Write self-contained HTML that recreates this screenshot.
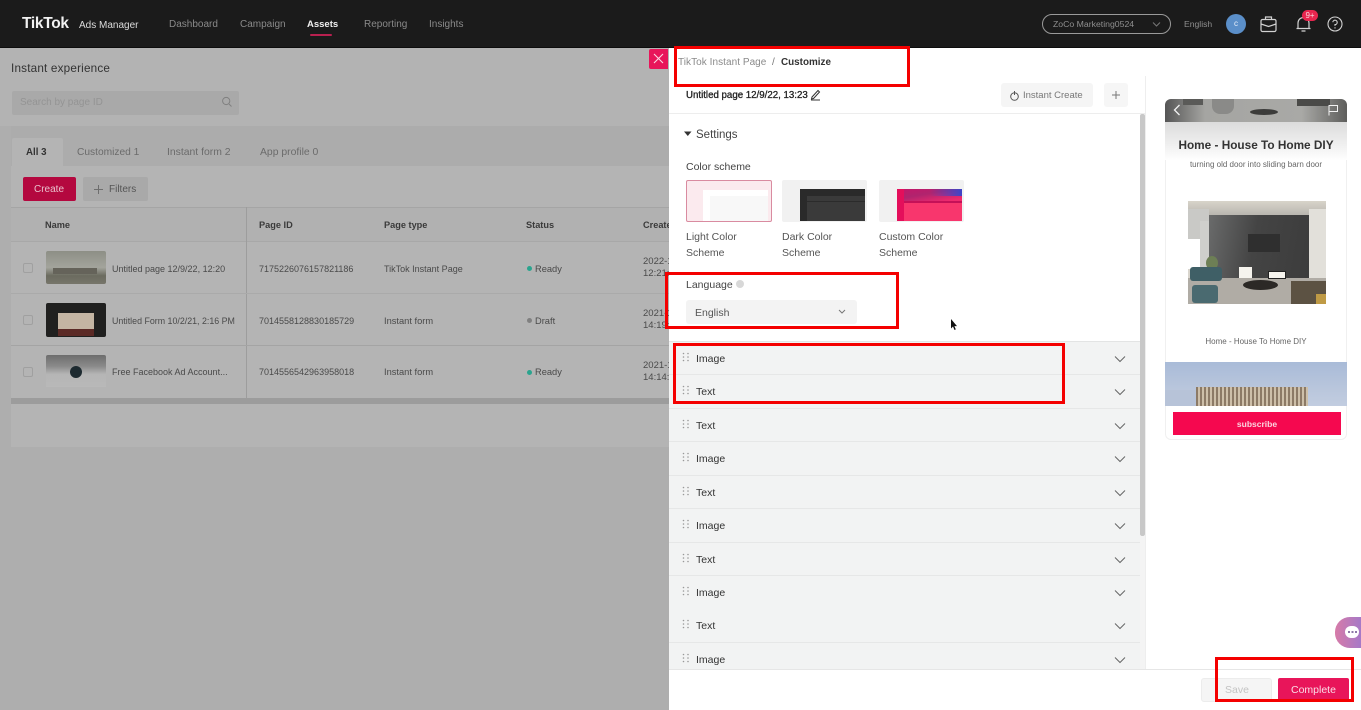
<!DOCTYPE html>
<html><head><meta charset="utf-8">
<style>
*{box-sizing:border-box}
html,body{margin:0;padding:0;width:1361px;height:710px;overflow:hidden;background:#fff;font-family:"Liberation Sans",sans-serif}
.a{position:absolute}
#c{position:absolute;left:0;top:0;width:1361px;height:710px;filter:blur(.3px);overflow:hidden}
.t{position:absolute;white-space:nowrap;line-height:14px;font-size:10px;color:#4a4a4a}
.h{font-weight:bold;color:#3a3a3a;font-size:9.2px}
.c{font-size:9px;color:#4a4a4a}
.row{position:absolute;left:669px;width:471px;height:33.5px;background:#f2f3f3;border-bottom:1px solid #e6e7e7}
.row span{position:absolute;left:27px;top:10px;font-size:10.5px;line-height:14px;color:#333}
.row svg{position:absolute}
</style></head><body>
<div id="c">

<!-- Left dimmed page -->
<div class="a" style="left:0;top:48px;width:669px;height:662px;background:#aeaeae"></div>
<div class="a" style="left:0;top:48px;width:669px;height:78px;background:#b3b3b3"></div>
<div class="t" style="left:11px;top:62px;font-size:11.7px;color:#333;letter-spacing:.2px">Instant experience</div>
<div class="a" style="left:12px;top:91px;width:227px;height:24px;background:#a9a9a9;border-radius:2px"></div>
<div class="t" style="left:20px;top:96px;color:#949494">Search by page ID</div>
<svg class="a" style="left:221px;top:96px" width="12" height="12" viewBox="0 0 12 12" fill="none" stroke="#808080"><circle cx="5.2" cy="5" r="3.6"/><path d="M8 8l2.5 2.5"/></svg>

<div class="a" style="left:11px;top:126px;width:658px;height:321px;background:#b4b4b4"></div>
<div class="a" style="left:11px;top:126px;width:658px;height:40px;background:#acacac"></div>
<div class="a" style="left:12px;top:138px;width:51px;height:28px;background:#b4b4b4;border-radius:2px 2px 0 0"></div>
<div class="t" style="left:26px;top:146px;font-weight:bold;color:#333;font-size:9.7px">All 3</div>
<div class="t" style="left:77px;top:146px;color:#6b6b6b;font-size:10.2px">Customized 1</div>
<div class="t" style="left:167px;top:146px;color:#6b6b6b;font-size:10.4px">Instant form 2</div>
<div class="t" style="left:260px;top:146px;color:#6b6b6b;font-size:10.4px">App profile 0</div>

<div class="a" style="left:23px;top:177px;width:53px;height:24px;background:#b4083f;border-radius:2px"></div>
<div class="t" style="left:34px;top:183px;color:#e9c0cc">Create</div>
<div class="a" style="left:83px;top:177px;width:65px;height:24px;background:#a9a9a9;border-radius:2px"></div>
<svg class="a" style="left:93px;top:184px" width="11" height="11" viewBox="0 0 11 11" stroke="#6e6e6e"><path d="M5.5 1v9M1 5.500h9"/></svg>
<div class="t" style="left:109px;top:183px;color:#555">Filters</div>

<div class="a" style="left:11px;top:207px;width:658px;height:35px;background:#b1b1b1;border-top:1.500px solid #a5a5a5;border-bottom:1.500px solid #a8a8a8"></div>
<div class="a" style="left:246px;top:207px;width:1px;height:191px;background:#9d9d9d"></div>
<div class="t h" style="left:45px;top:218px">Name</div>
<div class="t h" style="left:259px;top:218px">Page ID</div>
<div class="t h" style="left:384px;top:218px">Page type</div>
<div class="t h" style="left:526px;top:218px">Status</div>
<div class="t h" style="left:643px;top:218px;width:26px;overflow:hidden">Create</div>

<div class="a" style="left:11px;top:293px;width:658px;height:1px;background:#aaa"></div>
<div class="a" style="left:11px;top:345px;width:658px;height:1px;background:#a4a4a4"></div>
<div class="a" style="left:11px;top:398px;width:658px;height:6px;background:#9c9c9c"></div>

<!-- Row 1 -->
<div class="a" style="left:23px;top:263px;width:10px;height:10px;border:1px solid #a0a0a0;border-radius:2px"></div>
<div class="a" style="left:46px;top:251px;width:60px;height:33px;border-radius:2px;background:linear-gradient(180deg,#8d8f86 0%,#a3a49c 50%,#6b6b5f 75%,#77766b 100%)"></div>
<div class="a" style="left:53px;top:268px;width:44px;height:6px;background:#65635a"></div>
<div class="t c" style="left:112px;top:262px">Untitled page 12/9/22, 12:20</div>
<div class="t c" style="left:259px;top:262px">7175226076157821186</div>
<div class="t c" style="left:384px;top:262px">TikTok Instant Page</div>
<div class="a" style="left:527px;top:266px;width:5px;height:5px;border-radius:50%;background:#2aa48e"></div>
<div class="t c" style="left:535px;top:262px;font-size:9.300px">Ready</div>
<div class="t c" style="left:643px;top:255px;width:26px;overflow:hidden;font-size:9.500px">2022-12-09</div>
<div class="t c" style="left:643px;top:267px;width:26px;overflow:hidden;font-size:9.500px">12:21:00</div>

<!-- Row 2 -->
<div class="a" style="left:23px;top:315px;width:10px;height:10px;border:1px solid #a0a0a0;border-radius:2px"></div>
<div class="a" style="left:46px;top:303px;width:60px;height:34px;border-radius:2px;background:#20201f"></div>
<div class="a" style="left:58px;top:313px;width:36px;height:16px;background:#c4b5a3"></div>
<div class="a" style="left:58px;top:329px;width:36px;height:7px;background:#5b2a26"></div>
<div class="t c" style="left:112px;top:314px;font-size:8.850px">Untitled Form 10/2/21, 2:16 PM</div>
<div class="t c" style="left:259px;top:314px">7014558128830185729</div>
<div class="t c" style="left:384px;top:314px;font-size:9.300px">Instant form</div>
<div class="a" style="left:527px;top:318px;width:5px;height:5px;border-radius:50%;background:#808080"></div>
<div class="t c" style="left:535px;top:314px;font-size:9.300px">Draft</div>
<div class="t c" style="left:643px;top:307px;width:26px;overflow:hidden;font-size:9.500px">2021-10-02</div>
<div class="t c" style="left:643px;top:319px;width:26px;overflow:hidden;font-size:9.500px">14:19:00</div>

<!-- Row 3 -->
<div class="a" style="left:23px;top:367px;width:10px;height:10px;border:1px solid #a0a0a0;border-radius:2px"></div>
<div class="a" style="left:46px;top:355px;width:60px;height:32px;border-radius:2px 2px 0 0;background:linear-gradient(180deg,#6d6d6d 0%,#8a8a8a 35%,#b5b5b5 60%,#b9b9b9 100%)"></div>
<div class="a" style="left:70px;top:366px;width:12px;height:12px;border-radius:50%;background:#1d2a30"></div>
<div class="t c" style="left:112px;top:365px">Free Facebook Ad Account...</div>
<div class="t c" style="left:259px;top:365px">7014556542963958018</div>
<div class="t c" style="left:384px;top:365px;font-size:9.300px">Instant form</div>
<div class="a" style="left:527px;top:370px;width:5px;height:5px;border-radius:50%;background:#2aa48e"></div>
<div class="t c" style="left:535px;top:365px;font-size:9.300px">Ready</div>
<div class="t c" style="left:643px;top:359px;width:26px;overflow:hidden;font-size:9.500px">2021-10-02</div>
<div class="t c" style="left:643px;top:371px;width:26px;overflow:hidden;font-size:9.500px">14:14:00</div>

<!-- Header -->
<div class="a" style="left:0;top:0;width:1361px;height:48px;background:#1b1b1b;border-bottom:1.500px solid #0d0d0d"></div>
<div class="t" style="left:22px;top:15px;font-size:15.500px;line-height:18px;font-weight:bold;color:#f2f2f2;letter-spacing:-.3px">TikTok</div>
<div class="t" style="left:79px;top:19px;font-size:10px;color:#dcdcdc">Ads Manager</div>
<div class="t" style="left:169px;top:18px;color:#8a8a8a">Dashboard</div>
<div class="t" style="left:240px;top:18px;color:#8a8a8a">Campaign</div>
<div class="t" style="left:307px;top:18px;color:#f0f0f0;font-weight:bold;font-size:9.500px">Assets</div>
<div class="a" style="left:310px;top:34px;width:22px;height:2px;background:#b8204f;border-radius:1px"></div>
<div class="t" style="left:364px;top:18px;color:#8a8a8a">Reporting</div>
<div class="t" style="left:429px;top:18px;color:#8a8a8a">Insights</div>

<div class="a" style="left:1042px;top:14px;width:129px;height:20px;border:1px solid #9a9a9a;border-radius:10px"></div>
<div class="t" style="left:1053px;top:17px;font-size:8.700px;color:#8f8f8f">ZoCo Marketing0524</div>
<svg class="a" style="left:1152px;top:21px" width="9" height="7" viewBox="0 0 9 7" fill="none" stroke="#777"><path d="M1 1.500l3.500 3.500 3.500-3.500"/></svg>
<div class="t" style="left:1184px;top:17px;font-size:8.600px;color:#8f8f8f">English</div>
<div class="a" style="left:1226px;top:14px;width:20px;height:20px;border-radius:50%;background:#5b8fc9;color:#e6eefa;font-size:8px;line-height:20px;text-align:center">c</div>
<svg class="a" style="left:1260px;top:15px" width="17" height="18" viewBox="0 0 17 18" fill="none" stroke="#d2d2d2" stroke-width="1.200"><rect x="1" y="4.500" width="15" height="12" rx="1.500"/><path d="M5.500 4.500V2h6v2.500M1 9l7.500 2.500L16 9"/></svg>
<svg class="a" style="left:1295px;top:15px" width="17" height="18" viewBox="0 0 17 18" fill="none" stroke="#d2d2d2" stroke-width="1.200"><path d="M3 13.500V8a5.500 5.500 0 0111 0v5.500M1.500 13.500h14M6.500 16h4"/></svg>
<div class="a" style="left:1302px;top:10px;width:16px;height:11px;border-radius:6px;background:#e8264f;color:#f8d5dc;font-size:8px;line-height:11px;text-align:center">9+</div>
<svg class="a" style="left:1327px;top:16px" width="16" height="16" viewBox="0 0 16 16" fill="none" stroke="#d2d2d2" stroke-width="1.100"><circle cx="8" cy="8" r="7"/><path d="M5.800 6.200A2.200 2.200 0 118 8.600v1.300M8 11.300v1.200"/></svg>

<!-- Close button -->
<div class="a" style="left:649px;top:49px;width:19px;height:20px;background:#e8155a;border-radius:2px 0 0 2px"></div>
<svg class="a" style="left:653px;top:53px" width="11" height="11" viewBox="0 0 11 11" stroke="#fbd8e4" stroke-width="1.100"><path d="M1 1l9 9M10 1l-9 9"/></svg>

<!-- Right panel -->
<div class="a" style="left:669px;top:48px;width:692px;height:662px;background:#fff"></div>
<div class="t" style="left:678px;top:56px;font-size:10px;color:#8a8a8a;letter-spacing:.05px">TikTok Instant Page</div>
<div class="t" style="left:772px;top:56px;font-size:10px;color:#777">/</div>
<div class="t" style="left:781px;top:56px;font-size:9.900px;font-weight:bold;color:#333">Customize</div>
<div class="t" style="left:686px;top:89px;font-size:9.700px;color:#222;-webkit-text-stroke:.3px #222">Untitled page 12/9/22, 13:23</div>
<svg class="a" style="left:810px;top:89px" width="11" height="12" viewBox="0 0 11 12" fill="none" stroke="#333" stroke-width="1"><path d="M2 8l6-6.500 1.500 1.500-6 6.500-2 .5zM1 11h9"/></svg>
<div class="a" style="left:1001px;top:83px;width:92px;height:24px;background:#f5f5f5;border-radius:3px"></div>
<svg class="a" style="left:1009px;top:90px" width="11" height="11" viewBox="0 0 11 11" fill="none" stroke="#555"><circle cx="5.500" cy="6.500" r="3.800"/><path d="M5.500 1v4"/></svg>
<div class="t" style="left:1023px;top:89px;font-size:9.500px;color:#777">Instant Create</div>
<div class="a" style="left:1104px;top:83px;width:24px;height:24px;background:#f6f6f6;border-radius:3px"></div>
<svg class="a" style="left:1111px;top:90px" width="10" height="10" viewBox="0 0 10 10" stroke="#777"><path d="M5 1v8M1 5h8"/></svg>
<div class="a" style="left:669px;top:113px;width:477px;height:1px;background:#ededed"></div>
<div class="a" style="left:1145px;top:76px;width:1px;height:593px;background:#eeeeee"></div>
<div class="a" style="left:1140px;top:114px;width:5px;height:422px;background:#c8c8c8;border-radius:2px"></div>

<svg class="a" style="left:684px;top:131px" width="8" height="6" viewBox="0 0 8 6" fill="#333"><path d="M0 .5h7.500L3.800 5z"/></svg>
<div class="t" style="left:696px;top:128px;font-size:11.500px;color:#444">Settings</div>
<div class="t" style="left:686px;top:160px;font-size:10.500px;color:#444">Color scheme</div>

<div class="a" style="left:686px;top:180px;width:86px;height:42px;background:#fbeaee;border:1px solid #d98ba0;border-radius:2px"></div>
<div class="a" style="left:703px;top:190px;width:65px;height:31px;background:#f8f8f8"></div>
<div class="a" style="left:703px;top:190px;width:65px;height:6px;background:#fff"></div>
<div class="a" style="left:703px;top:196px;width:7px;height:25px;background:#fff"></div>
<div class="a" style="left:782px;top:180px;width:85px;height:42px;background:#f1f1f1;border-radius:2px"></div>
<div class="a" style="left:800px;top:189px;width:65px;height:32px;background:#3a3a3a"></div>
<div class="a" style="left:800px;top:189px;width:7px;height:32px;background:#2a2a2a"></div>
<div class="a" style="left:800px;top:189px;width:65px;height:7px;background:#2a2a2a"></div>
<div class="a" style="left:807px;top:201px;width:58px;height:1px;background:#2b2b2b"></div>
<div class="a" style="left:879px;top:180px;width:85px;height:42px;background:#f1f1f1;border-radius:2px"></div>
<div class="a" style="left:897px;top:189px;width:65px;height:32px;background:#f8366d"></div>
<div class="a" style="left:897px;top:189px;width:7px;height:32px;background:#e40f5b"></div>
<div class="a" style="left:904px;top:189px;width:58px;height:12px;background:linear-gradient(170deg,#c2186a 0%,#b0246e 40%,#f02a6e 90%)"></div>
<div class="a" style="left:930px;top:189px;width:32px;height:7px;background:linear-gradient(90deg,rgba(60,69,200,0),#3c45c8)"></div>
<div class="a" style="left:904px;top:201px;width:58px;height:1.500px;background:#c51158"></div>

<div class="t" style="left:686px;top:230px;font-size:10.500px;color:#555">Light Color</div>
<div class="t" style="left:686px;top:246px;font-size:10.500px;color:#555">Scheme</div>
<div class="t" style="left:782px;top:230px;font-size:10.500px;color:#555">Dark Color</div>
<div class="t" style="left:782px;top:246px;font-size:10.500px;color:#555">Scheme</div>
<div class="t" style="left:879px;top:230px;font-size:10.500px;color:#555">Custom Color</div>
<div class="t" style="left:879px;top:246px;font-size:10.500px;color:#555">Scheme</div>

<div class="t" style="left:686px;top:278px;font-size:10.500px;color:#444">Language</div>
<div class="a" style="left:736px;top:280px;width:8px;height:8px;border-radius:50%;background:#d8d8d8"></div>
<div class="a" style="left:686px;top:300px;width:171px;height:24px;background:#f3f3f3;border-radius:3px"></div>
<div class="t" style="left:695px;top:306px;font-size:10.500px;color:#555">English</div>
<svg class="a" style="left:838px;top:309px" width="8" height="6" viewBox="0 0 8 6" fill="none" stroke="#777"><path d="M1 1l3 3 3-3"/></svg>

<svg class="a" style="left:950px;top:318px" width="8" height="13" viewBox="0 0 8 13"><path d="M1 1v9.500l2-2 1.500 3.500 1.300-.6-1.400-3.300H7z" fill="#111"/></svg>

<!-- Accordion rows -->
<div class="row" style="top:341px;border-top:1px solid #e3e4e4"><span>Image</span><svg style="left:13px;top:10px" width="8" height="11" fill="#999"><circle cx="1.500" cy="1.500" r=".8"/><circle cx="6" cy="1.500" r=".8"/><circle cx="1.500" cy="5" r=".8"/><circle cx="6" cy="5" r=".8"/><circle cx="1.500" cy="8.500" r=".8"/><circle cx="6" cy="8.500" r=".8"/></svg><svg style="left:445px;top:13px" width="12" height="8" fill="none" stroke="#666"><path d="M1 1.500l5 5 5-5"/></svg></div>
<div class="row" style="top:375px"><span>Text</span><svg style="left:13px;top:10px" width="8" height="11" fill="#999"><circle cx="1.500" cy="1.500" r=".8"/><circle cx="6" cy="1.500" r=".8"/><circle cx="1.500" cy="5" r=".8"/><circle cx="6" cy="5" r=".8"/><circle cx="1.500" cy="8.500" r=".8"/><circle cx="6" cy="8.500" r=".8"/></svg><svg style="left:445px;top:13px" width="12" height="8" fill="none" stroke="#666"><path d="M1 1.500l5 5 5-5"/></svg></div>
<div class="row" style="top:408.500px"><span>Text</span><svg style="left:13px;top:10px" width="8" height="11" fill="#999"><circle cx="1.500" cy="1.500" r=".8"/><circle cx="6" cy="1.500" r=".8"/><circle cx="1.500" cy="5" r=".8"/><circle cx="6" cy="5" r=".8"/><circle cx="1.500" cy="8.500" r=".8"/><circle cx="6" cy="8.500" r=".8"/></svg><svg style="left:445px;top:13px" width="12" height="8" fill="none" stroke="#666"><path d="M1 1.500l5 5 5-5"/></svg></div>
<div class="row" style="top:442px"><span>Image</span><svg style="left:13px;top:10px" width="8" height="11" fill="#999"><circle cx="1.500" cy="1.500" r=".8"/><circle cx="6" cy="1.500" r=".8"/><circle cx="1.500" cy="5" r=".8"/><circle cx="6" cy="5" r=".8"/><circle cx="1.500" cy="8.500" r=".8"/><circle cx="6" cy="8.500" r=".8"/></svg><svg style="left:445px;top:13px" width="12" height="8" fill="none" stroke="#666"><path d="M1 1.500l5 5 5-5"/></svg></div>
<div class="row" style="top:475.500px"><span>Text</span><svg style="left:13px;top:10px" width="8" height="11" fill="#999"><circle cx="1.500" cy="1.500" r=".8"/><circle cx="6" cy="1.500" r=".8"/><circle cx="1.500" cy="5" r=".8"/><circle cx="6" cy="5" r=".8"/><circle cx="1.500" cy="8.500" r=".8"/><circle cx="6" cy="8.500" r=".8"/></svg><svg style="left:445px;top:13px" width="12" height="8" fill="none" stroke="#666"><path d="M1 1.500l5 5 5-5"/></svg></div>
<div class="row" style="top:509px"><span>Image</span><svg style="left:13px;top:10px" width="8" height="11" fill="#999"><circle cx="1.500" cy="1.500" r=".8"/><circle cx="6" cy="1.500" r=".8"/><circle cx="1.500" cy="5" r=".8"/><circle cx="6" cy="5" r=".8"/><circle cx="1.500" cy="8.500" r=".8"/><circle cx="6" cy="8.500" r=".8"/></svg><svg style="left:445px;top:13px" width="12" height="8" fill="none" stroke="#666"><path d="M1 1.500l5 5 5-5"/></svg></div>
<div class="row" style="top:542.500px"><span>Text</span><svg style="left:13px;top:10px" width="8" height="11" fill="#999"><circle cx="1.500" cy="1.500" r=".8"/><circle cx="6" cy="1.500" r=".8"/><circle cx="1.500" cy="5" r=".8"/><circle cx="6" cy="5" r=".8"/><circle cx="1.500" cy="8.500" r=".8"/><circle cx="6" cy="8.500" r=".8"/></svg><svg style="left:445px;top:13px" width="12" height="8" fill="none" stroke="#666"><path d="M1 1.500l5 5 5-5"/></svg></div>
<div class="row" style="top:576px"><span>Image</span><svg style="left:13px;top:10px" width="8" height="11" fill="#999"><circle cx="1.500" cy="1.500" r=".8"/><circle cx="6" cy="1.500" r=".8"/><circle cx="1.500" cy="5" r=".8"/><circle cx="6" cy="5" r=".8"/><circle cx="1.500" cy="8.500" r=".8"/><circle cx="6" cy="8.500" r=".8"/></svg><svg style="left:445px;top:13px" width="12" height="8" fill="none" stroke="#666"><path d="M1 1.500l5 5 5-5"/></svg></div>
<div class="row" style="top:609px;height:34px"><span>Text</span><svg style="left:13px;top:10px" width="8" height="11" fill="#999"><circle cx="1.500" cy="1.500" r=".8"/><circle cx="6" cy="1.500" r=".8"/><circle cx="1.500" cy="5" r=".8"/><circle cx="6" cy="5" r=".8"/><circle cx="1.500" cy="8.500" r=".8"/><circle cx="6" cy="8.500" r=".8"/></svg><svg style="left:445px;top:13px" width="12" height="8" fill="none" stroke="#666"><path d="M1 1.500l5 5 5-5"/></svg></div>
<div class="row" style="top:643px;height:26px;border-bottom:0"><span>Image</span><svg style="left:13px;top:10px" width="8" height="11" fill="#999"><circle cx="1.500" cy="1.500" r=".8"/><circle cx="6" cy="1.500" r=".8"/><circle cx="1.500" cy="5" r=".8"/><circle cx="6" cy="5" r=".8"/><circle cx="1.500" cy="8.500" r=".8"/><circle cx="6" cy="8.500" r=".8"/></svg><svg style="left:445px;top:13px" width="12" height="8" fill="none" stroke="#666"><path d="M1 1.500l5 5 5-5"/></svg></div>
<div class="a" style="left:1140px;top:536px;width:5px;height:133px;background:#f4f4f4"></div>

<!-- Footer -->
<div class="a" style="left:669px;top:669px;width:692px;height:1px;background:#e6e6e6"></div>
<div class="a" style="left:1201px;top:678px;width:71px;height:24px;background:#f5f5f5;border:1px solid #ececec;border-radius:3px"></div>
<div class="t" style="left:1225px;top:683px;font-size:10.500px;color:#c4c4c4">Save</div>
<div class="a" style="left:1278px;top:678px;width:71px;height:24px;background:#e8155a;border-radius:2px"></div>
<div class="t" style="left:1291px;top:683px;font-size:10.500px;color:#fbdce6">Complete</div>

<!-- Preview -->
<div class="a" style="left:1165px;top:99px;width:182px;height:341px;background:#fff;border:1px solid #f0f0f0;border-radius:6px;overflow:hidden"></div>
<div class="a" style="left:1165px;top:99px;width:182px;height:23px;border-radius:6px 6px 0 0;background:linear-gradient(90deg,#555 0%,#a5a5a2 22%,#a9a9a6 75%,#5e5e5c 100%);overflow:hidden">
  <div class="a" style="left:47px;top:0;width:22px;height:15px;border-radius:0 0 8px 8px;background:#8a8a88"></div>
  <div class="a" style="left:85px;top:10px;width:28px;height:6px;background:#3c3c3a;border-radius:50%"></div>
  <div class="a" style="left:132px;top:0;width:33px;height:7px;background:#4a4a48"></div>
  <div class="a" style="left:18px;top:0;width:20px;height:6px;background:#5a5a58"></div>
</div>
<div class="a" style="left:1165px;top:122px;width:182px;height:38px;background:linear-gradient(180deg,#dcdcdc 0%,#eeeeee 55%,#fff 100%)"></div>
<svg class="a" style="left:1173px;top:104px" width="8" height="12" viewBox="0 0 8 12" fill="none" stroke="#f2f2f2" stroke-width="1.300"><path d="M6.500 1L1.500 6l5 5"/></svg>
<svg class="a" style="left:1327px;top:104px" width="12" height="12" viewBox="0 0 12 12" fill="none" stroke="#f2f2f2"><path d="M2 11.500V1.500h8.500v6H2"/></svg>
<div class="t" style="left:1165px;top:138px;width:182px;text-align:center;font-size:11.800px;font-weight:bold;color:#333">Home - House To Home DIY</div>
<div class="t" style="left:1165px;top:158px;width:182px;text-align:center;font-size:8px;color:#666">turning old door into sliding barn door</div>

<div class="a" style="left:1188px;top:201px;width:138px;height:103px;background:#d9d5cd;overflow:hidden">
  <div class="a" style="left:0;top:0;width:138px;height:14px;background:linear-gradient(180deg,#d8d4ca,#b9b6af)"></div>
  <div class="a" style="left:121px;top:8px;width:17px;height:95px;background:#e2e0da"></div>
  <div class="a" style="left:0;top:8px;width:21px;height:30px;background:#c9c9c6"></div>
  <div class="a" style="left:0;top:38px;width:12px;height:30px;background:#fff"></div>
  <div class="a" style="left:12px;top:20px;width:9px;height:50px;background:#cfcfcc"></div>
  <div class="a" style="left:21px;top:14px;width:100px;height:63px;background:linear-gradient(100deg,#6a6b6b 0%,#444 45%,#3c3c3c 100%)"></div>
  <div class="a" style="left:60px;top:33px;width:32px;height:18px;background:#2f2f2f"></div>
  <div class="a" style="left:0;top:77px;width:138px;height:26px;background:#b0aca5"></div>
  <div class="a" style="left:103px;top:80px;width:35px;height:23px;background:#5c5243"></div>
  <div class="a" style="left:128px;top:93px;width:10px;height:10px;background:#bf9a45"></div>
  <div class="a" style="left:18px;top:55px;width:12px;height:14px;border-radius:50%;background:#6d7f55"></div>
  <div class="a" style="left:51px;top:66px;width:13px;height:11px;background:#f6f4ee"></div>
  <div class="a" style="left:80px;top:70px;width:18px;height:8px;background:#f6f4ee;border:1px solid #222"></div>
  <div class="a" style="left:55px;top:79px;width:35px;height:10px;border-radius:50%;background:#2c2926"></div>
  <div class="a" style="left:2px;top:66px;width:32px;height:14px;background:#3f5f66;border-radius:3px"></div>
  <div class="a" style="left:4px;top:84px;width:26px;height:18px;background:#4a6a70;border-radius:3px"></div>
</div>
<div class="t" style="left:1165px;top:335px;width:182px;text-align:center;font-size:8px;color:#666">Home - House To Home DIY</div>

<div class="a" style="left:1165px;top:362px;width:182px;height:44px;background:linear-gradient(180deg,#a9bbd8 0%,#b9c6dc 60%,#c2cde0 100%);overflow:hidden">
  <div class="a" style="left:31px;top:25px;width:112px;height:19px;background:repeating-linear-gradient(90deg,#8c7a66 0 2px,#cdbfa9 2px 4px)"></div>
  <div class="a" style="left:0;top:28px;width:31px;height:16px;background:#b7c3d8"></div>
</div>
<div class="a" style="left:1173px;top:412px;width:168px;height:23px;background:#f5084f"></div>
<div class="t" style="left:1173px;top:417px;width:168px;text-align:center;font-size:8.500px;font-weight:bold;color:#fbd5e0">subscribe</div>

<!-- Chat bubble -->
<div class="a" style="left:1335px;top:617px;width:40px;height:31px;border-radius:15px;background:linear-gradient(90deg,#d77ba8,#8c78d8)"></div>
<div class="a" style="left:1345px;top:626px;width:14px;height:12px;border-radius:6px;background:#fff"></div>
<div class="a" style="left:1347.500px;top:631px;width:9px;height:2px;background:repeating-linear-gradient(90deg,#8c78a8 0 2px,transparent 2px 3.500px)"></div>
</div>

<!-- Red annotation boxes -->
<div class="a" style="left:674px;top:46px;width:236px;height:41px;border:3px solid #f40000"></div>
<div class="a" style="left:665px;top:272px;width:234px;height:57px;border:3px solid #f40000"></div>
<div class="a" style="left:673px;top:343px;width:392px;height:61px;border:3px solid #f40000"></div>
<div class="a" style="left:1215px;top:657px;width:139px;height:45px;border:3px solid #f40000"></div>

</body></html>
